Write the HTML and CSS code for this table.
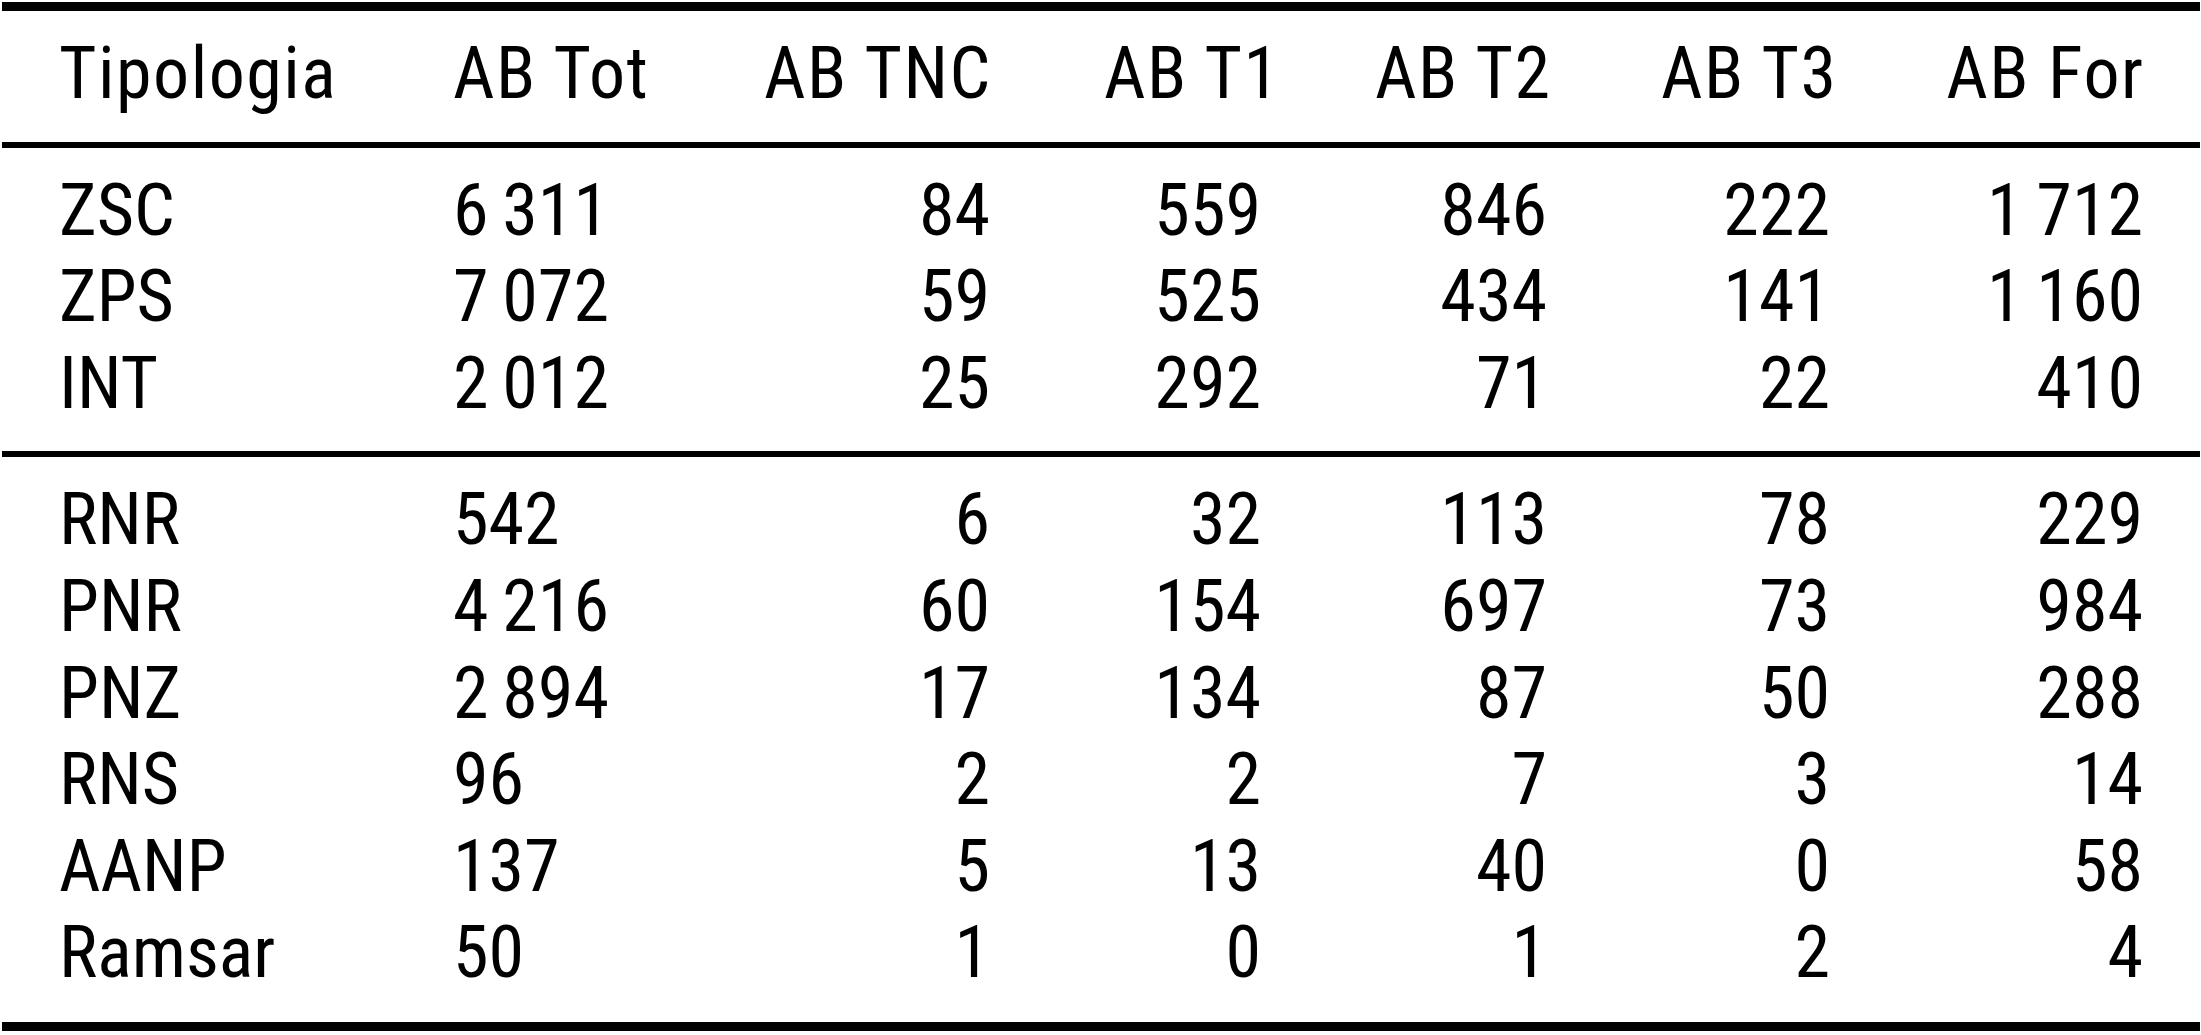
FILE: index.html
```html
<!DOCTYPE html>
<html lang="it">
<head>
<meta charset="utf-8">
<title>Tipologia</title>
<link rel="stylesheet" href="styles.css">
</head>
<body>
<div class="page">
<table class="data">
  <colgroup>
    <col class="c-type"><col class="c-tot"><col class="c-tnc"><col class="c-t1"><col class="c-t2"><col class="c-t3"><col class="c-for">
  </colgroup>
  <thead>
    <tr><th class="l">Tipologia</th><th class="l">AB Tot</th><th>AB TNC</th><th>AB T1</th><th>AB T2</th><th>AB T3</th><th>AB For</th></tr>
  </thead>
  <tbody class="grp">
    <tr><td class="l name">ZSC</td><td class="l">6&thinsp;311</td><td>84</td><td>559</td><td>846</td><td>222</td><td>1&thinsp;712</td></tr>
    <tr><td class="l name">ZPS</td><td class="l">7&thinsp;072</td><td>59</td><td>525</td><td>434</td><td>141</td><td>1&thinsp;160</td></tr>
    <tr><td class="l name">INT</td><td class="l">2&thinsp;012</td><td>25</td><td>292</td><td>71</td><td>22</td><td>410</td></tr>
  </tbody>
  <tbody class="grp last">
    <tr><td class="l name">RNR</td><td class="l">542</td><td>6</td><td>32</td><td>113</td><td>78</td><td>229</td></tr>
    <tr><td class="l name">PNR</td><td class="l">4&thinsp;216</td><td>60</td><td>154</td><td>697</td><td>73</td><td>984</td></tr>
    <tr><td class="l name">PNZ</td><td class="l">2&thinsp;894</td><td>17</td><td>134</td><td>87</td><td>50</td><td>288</td></tr>
    <tr><td class="l name">RNS</td><td class="l">96</td><td>2</td><td>2</td><td>7</td><td>3</td><td>14</td></tr>
    <tr><td class="l name">AANP</td><td class="l">137</td><td>5</td><td>13</td><td>40</td><td>0</td><td>58</td></tr>
    <tr><td class="l name">Ramsar</td><td class="l">50</td><td>1</td><td>0</td><td>1</td><td>2</td><td>4</td></tr>
  </tbody>
</table>
</div>
</body>
</html>
```

FILE: styles.css
```css
html, body {
  margin: 0;
  background: #ffffff;
}

.page {
  padding: 2px 1px 0 2px;
}

.data {
  border-collapse: separate;
  border-spacing: 0;
  table-layout: fixed;
  width: 2198px;
  font-family: Roboto, "Liberation Sans", sans-serif;
  font-stretch: 75%;
  font-size: 72px;
  color: #000000;
}

.c-type { width: 394px; }
.c-tot  { width: 311px; }
.c-tnc  { width: 340px; }
.c-t1   { width: 271px; }
.c-t2   { width: 286px; }
.c-t3   { width: 283px; }
.c-for  { width: 313px; }

.data th,
.data td {
  padding: 0 57px;
  line-height: 86.6px;
  text-align: right;
  font-weight: normal;
  white-space: nowrap;
}

.data th {
  letter-spacing: 1.5px;
  padding-right: 55.5px;
}

.data .l {
  text-align: left;
}

.data thead th {
  border-top: 9px solid #000000;
  border-bottom: 6px solid #000000;
  padding-top: 20px;
  padding-bottom: 24px;
}

.grp tr:first-child td {
  padding-top: 20px;
}

.grp tr:last-child td {
  padding-bottom: 24px;
  border-bottom: 6px solid #000000;
}

.grp.last tr:last-child td {
  padding-bottom: 25px;
  border-bottom-width: 9px;
}
```
